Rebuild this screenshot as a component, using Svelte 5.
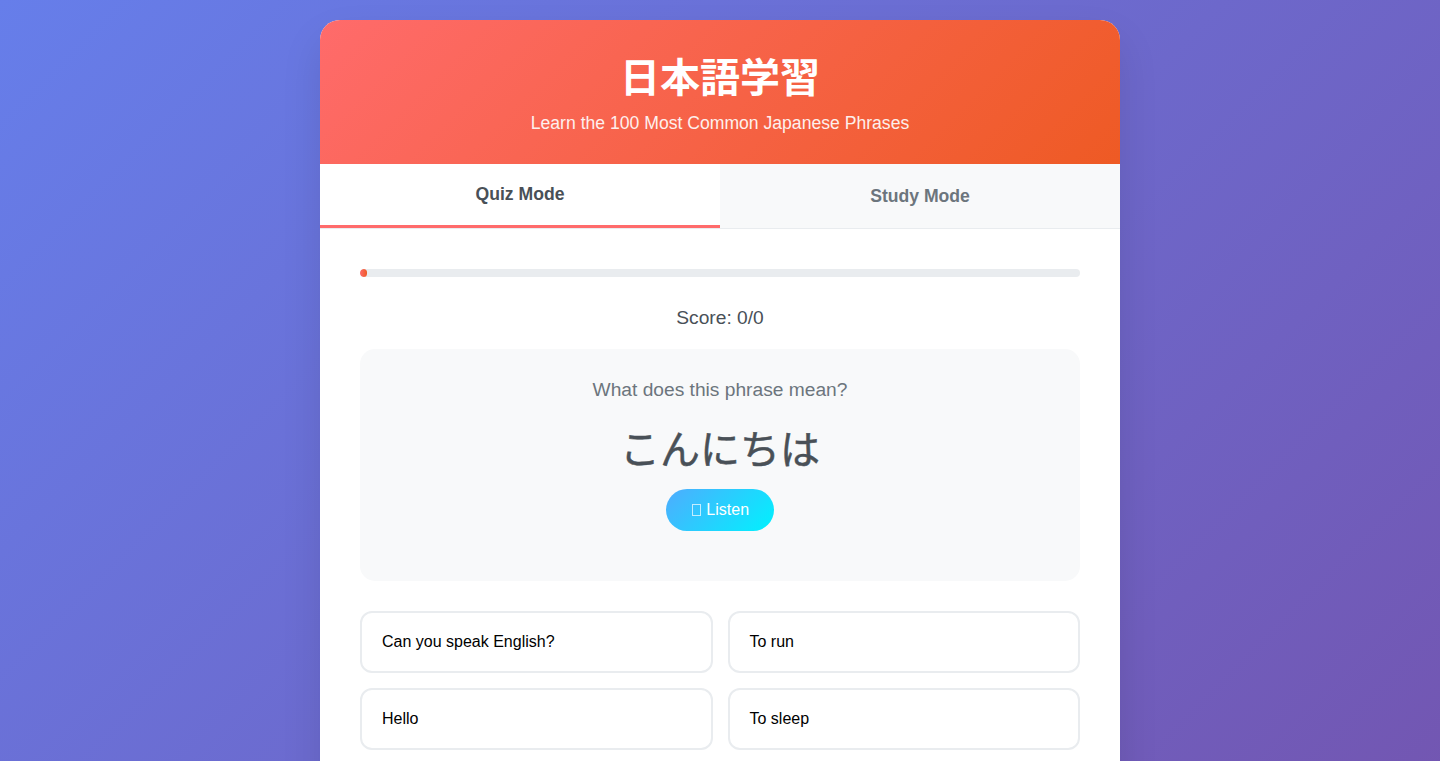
<script>
  let score = 0;
  let total = 0;
  let mode = 'quiz';

  const options = ['Can you speak English?', 'To run', 'Hello', 'To sleep'];
</script>

<div class="container">
  <header class="header">
    <h1>日本語学習</h1>
    <p>Learn the 100 Most Common Japanese Phrases</p>
  </header>

  <div class="tabs">
    <button class="tab" class:active={mode === 'quiz'} on:click={() => (mode = 'quiz')}>Quiz Mode</button>
    <button class="tab" class:active={mode === 'study'} on:click={() => (mode = 'study')}>Study Mode</button>
  </div>

  <main class="content">
    <div class="progress-bar">
      <div class="progress-fill" style="width: 1%"></div>
    </div>

    <div class="score">Score: {score}/{total}</div>

    <div class="question-card">
      <div class="question-label">What does this phrase mean?</div>
      <div class="phrase">こんにちは</div>
      <button class="listen"><span class="missing-glyph" aria-hidden="true"></span> Listen</button>
    </div>

    <div class="options">
      {#each options as option}
        <button class="option">{option}</button>
      {/each}
    </div>
  </main>
</div>

<style>
  :global(html), :global(body) {
    height: 100%;
    overflow: hidden;
  }

  :global(body) {
    margin: 0;
    background: linear-gradient(135deg, #667eea 0%, #764ba2 100%) 0 0 / 100% 1400px no-repeat;
    font-family: "Liberation Sans", "Noto Sans CJK JP", sans-serif;
  }

  .container {
    box-sizing: border-box;
    width: 800px;
    margin: 20px auto;
    background: white;
    border-radius: 20px;
    box-shadow: 0 20px 40px rgba(0, 0, 0, 0.1);
    overflow: hidden;
  }

  .header {
    padding: 30px;
    text-align: center;
    color: white;
    background: linear-gradient(135deg, #ff6b6b, #ee5a24);
  }

  .header h1 {
    margin: 0 0 7px;
    font-size: 40px;
    line-height: 56px;
  }

  .header p {
    margin: 0;
    font-size: 17.6px;
    line-height: 21px;
    opacity: 0.9;
  }

  .tabs {
    display: flex;
    align-items: flex-start;
    background: #f8f9fa;
    border-bottom: 1px solid #e9ecef;
  }

  .tab {
    flex: 1;
    padding: 20px;
    border: none;
    background: #f8f9fa;
    color: #6c757d;
    font-family: inherit;
    font-size: 17.6px;
    font-weight: 700;
    line-height: 24px;
    cursor: pointer;
  }

  .tab.active {
    padding: 18px 20px 19px;
    background: white;
    color: #495057;
    border-bottom: 3px solid #ff6b6b;
  }

  .content {
    padding: 40px;
  }

  .progress-bar {
    height: 8px;
    margin-bottom: 30px;
    background: #e9ecef;
    border-radius: 4px;
    overflow: hidden;
  }

  .progress-fill {
    height: 100%;
    background: linear-gradient(90deg, #ff6b6b, #ee5a24);
    border-radius: 4px;
  }

  .score {
    margin-bottom: 20px;
    text-align: center;
    color: #495057;
    font-size: 19.2px;
    line-height: 22px;
  }

  .question-card {
    padding: 30px 30px 50px;
    margin-bottom: 30px;
    text-align: center;
    background: #f8f9fa;
    border-radius: 15px;
  }

  .question-label {
    margin-bottom: 20px;
    color: #6c757d;
    font-size: 19.2px;
    line-height: 22px;
  }

  .phrase {
    margin-bottom: 10px;
    color: #495057;
    font-size: 40px;
    line-height: 58px;
    -webkit-text-stroke: 0.5px #495057;
  }

  .listen {
    padding: 12px 25px;
    border: none;
    border-radius: 25px;
    background: linear-gradient(135deg, #4facfe, #00f2fe);
    color: white;
    font-family: inherit;
    font-size: 16px;
    line-height: 18px;
    cursor: pointer;
  }

  .missing-glyph {
    display: inline-block;
    box-sizing: border-box;
    width: 9px;
    height: 12px;
    margin: 0 1px;
    border: 1px solid rgba(255, 255, 255, 0.7);
    vertical-align: -1px;
  }

  .options {
    display: grid;
    grid-template-columns: 1fr 1fr;
    gap: 15px;
  }

  .option {
    padding: 20px;
    border: 2px solid #e9ecef;
    border-radius: 12px;
    background: white;
    color: black;
    text-align: left;
    font-family: inherit;
    font-size: 16px;
    line-height: 18px;
    cursor: pointer;
  }
</style>
